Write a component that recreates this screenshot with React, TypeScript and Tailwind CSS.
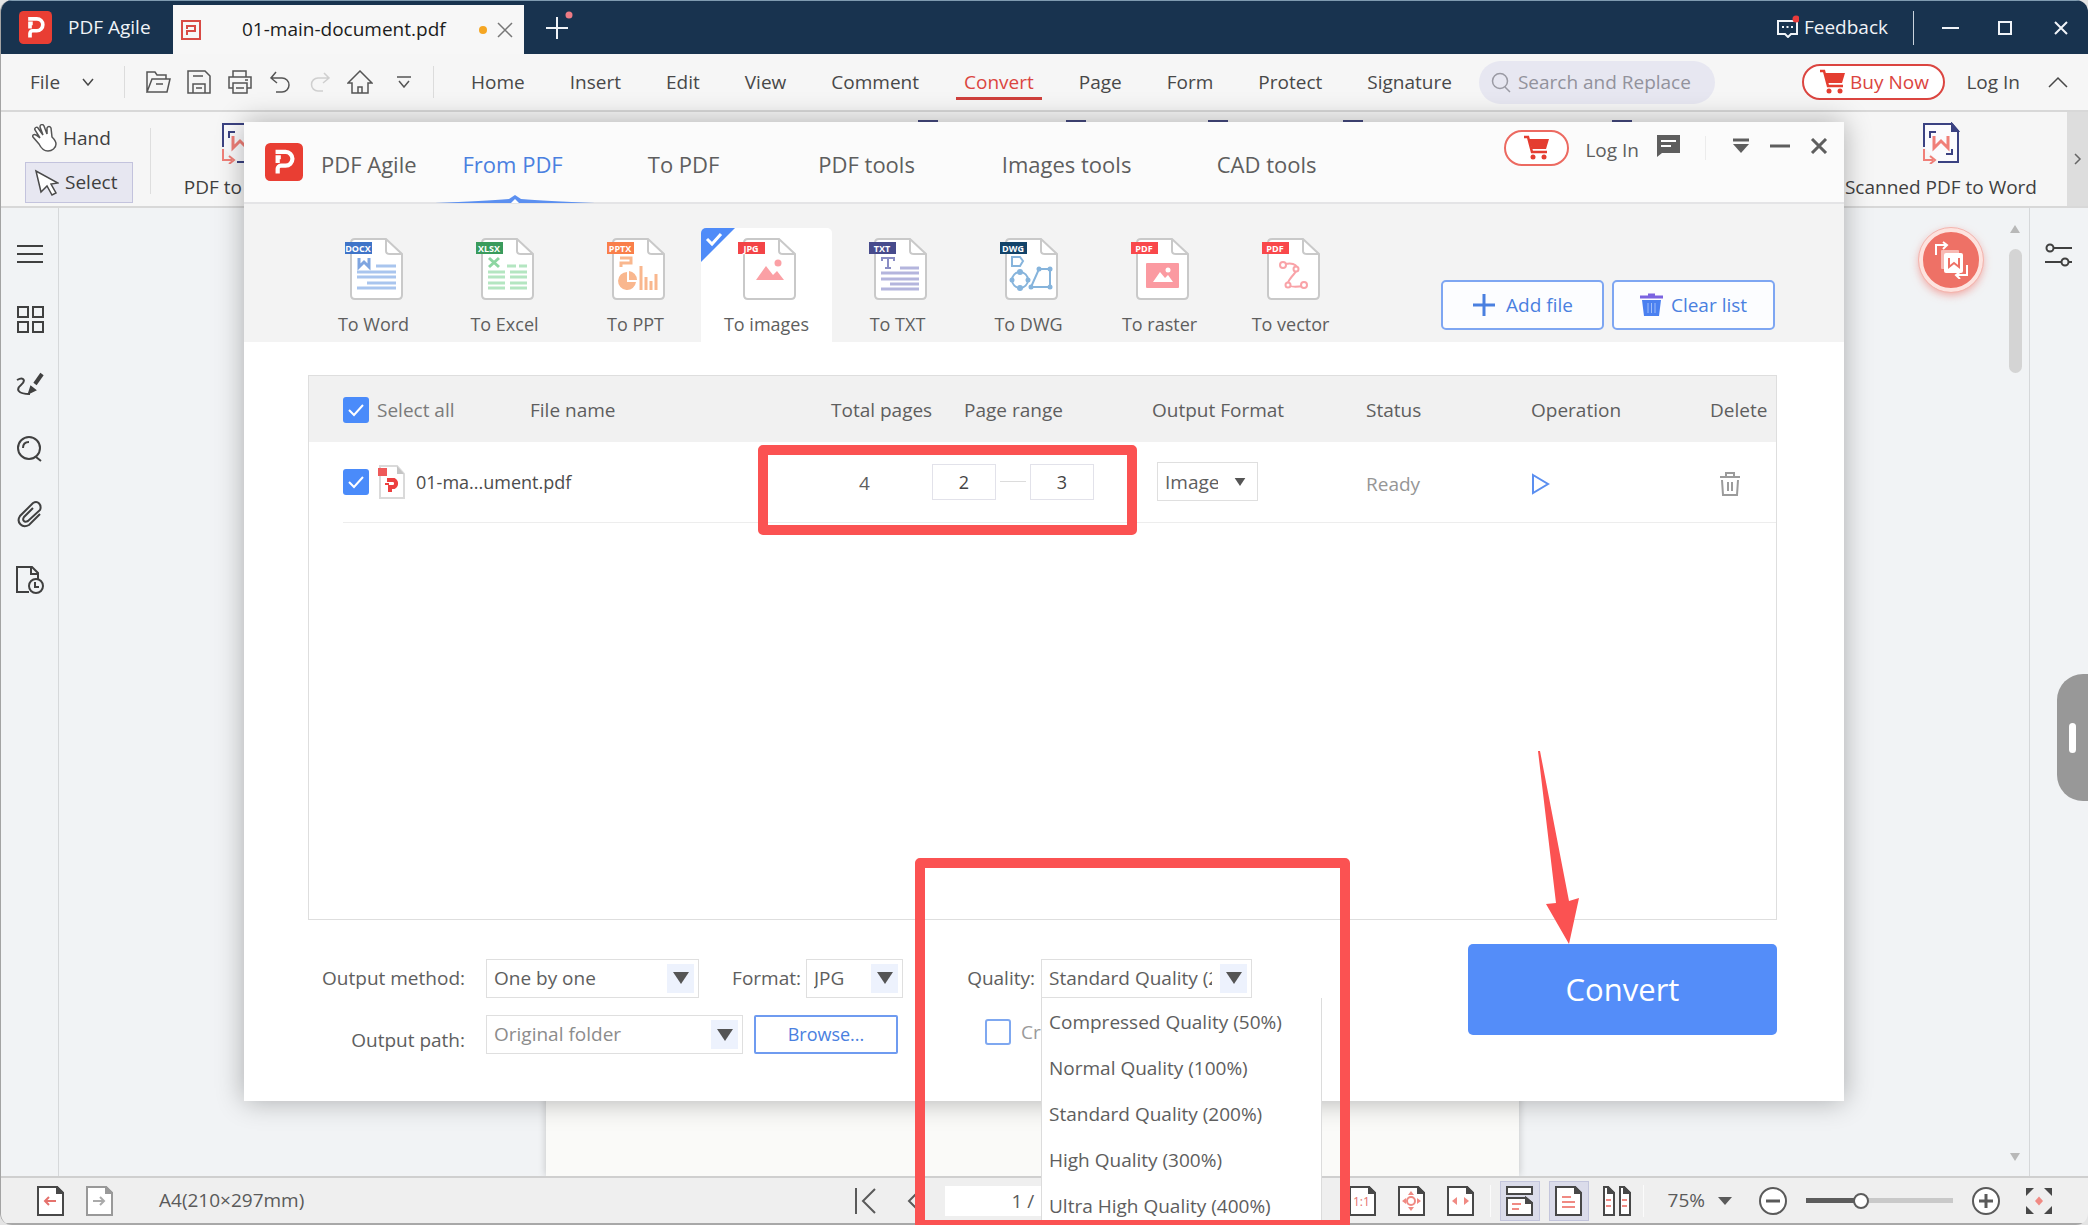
import { useState, type ReactNode } from 'react';

const menuTabs = ['Home', 'Insert', 'Edit', 'View', 'Comment', 'Convert', 'Page', 'Form', 'Protect', 'Signature'];
const qualities = [
  'Compressed Quality (50%)',
  'Normal Quality (100%)',
  'Standard Quality (200%)',
  'High Quality (300%)',
  'Ultra High Quality (400%)',
];

interface SvgProps {
  w: number;
  h: number;
  box?: string;
  className?: string;
  children: ReactNode;
}

function Svg({ w, h, box, className = '', children }: SvgProps) {
  return (
    <svg width={w} height={h} viewBox={box ?? `0 0 ${w} ${h}`} fill="none" stroke="currentColor"
         strokeWidth="2" className={`shrink-0 ${className}`} aria-hidden="true">
      {children}
    </svg>
  );
}

function Logo({ size }: { size: number }) {
  return (
    <Svg w={size} h={size} box="0 0 36 36">
      <rect width="36" height="36" rx="5" fill="#e93e33" stroke="none" />
      <path d="M10 8.500h9.500a6.500 6.500 0 0 1 0 13H15a3 3 0 0 0-3 3V29M12 19v-5.500h3" stroke="#fff" strokeWidth="4" />
    </Svg>
  );
}

function Cart() {
  return (
    <Svg w={27} h={26} className="text-[#e43d30]">
      <path d="M1 2h4l4 15h15" strokeWidth="2.500" />
      <path d="M6 4h20l-3 10H9z" fill="currentColor" stroke="none" />
      <circle cx="10" cy="22" r="2.500" fill="currentColor" stroke="none" />
      <circle cx="21" cy="22" r="2.500" fill="currentColor" stroke="none" />
    </Svg>
  );
}

function RibbonDoc() {
  return (
    <Svg w={38} h={42}>
      <path d="M2 25V2h28l6 7v31H16" stroke="#3b4282" fill="#fbfbfd" />
      <path d="M30 2v7h6z" fill="#3b4282" stroke="#3b4282" />
      <path d="M8 16v-6h6M30 27v5h-6" stroke="#3b4282" />
      <path d="M12 14v12l7-7 7 7V14" stroke="#f07f78" strokeWidth="3" />
      <path d="M2 27v11h9M8 34l5 4-5 4" stroke="#f07f78" />
    </Svg>
  );
}

/* ---------- title bar ---------- */

function TitleBar() {
  return (
    <header className="flex h-[54px] shrink-0 items-stretch border-t border-[#7f9bb0] bg-[#18334f] text-[19px] text-[#f0f4f8]">
      <div className="flex w-[172px] items-center gap-4 pl-[18px]">
        <Logo size={33} />
        <span className="whitespace-nowrap">PDF Agile</span>
      </div>
      <div className="mt-1 flex w-[351px] items-center bg-[#f7f7f7] pl-2 pr-[11px] text-[#1c1c1c]">
        <Svg w={20} h={20} className="text-[#d84a44]">
          <rect x="1" y="1" width="18" height="18" />
          <path d="M6 15v-4h8V6H6v3" />
        </Svg>
        <span className="ml-[41px] flex-1 whitespace-nowrap">01-main-document.pdf</span>
        <span className="size-2 rounded-full bg-[#f5a623]" />
        <button aria-label="Close tab" className="ml-[10px]">
          <Svg w={16} h={16} className="text-[#777]"><path d="M1 1l14 14M15 1L1 15" strokeWidth="1.500" /></Svg>
        </button>
      </div>
      <button aria-label="New tab" className="ml-[21px] mb-2">
        <Svg w={30} h={34}>
          <path d="M12 10v22M1 21h22" />
          <circle cx="24" cy="8" r="3.500" fill="#ee7b84" stroke="none" />
        </Svg>
      </button>
      <div className="ml-auto flex items-center pr-5">
        <button className="flex items-center gap-[5px]">
          <Svg w={22} h={24} className="mb-1">
            <path d="M1 7h19v13h-6l-3 3-3-3H1z" />
            <path d="M5 13h2M9.500 13h2M14 13h2" />
            <circle cx="19" cy="5" r="3.500" fill="#ea3b3b" stroke="none" />
          </Svg>
          Feedback
        </button>
        <span className="ml-[25px] h-[34px] w-px bg-[#c9d3dd]" />
        <button aria-label="Minimize" className="ml-7"><Svg w={17} h={16}><path d="M0 8h17" /></Svg></button>
        <button aria-label="Maximize" className="ml-[38px]"><Svg w={16} h={16}><path d="M2 2h12v12H2z" /></Svg></button>
        <button aria-label="Close" className="ml-[41px]"><Svg w={14} h={14}><path d="M1 1l12 12M13 1L1 13" /></Svg></button>
      </div>
    </header>
  );
}

/* ---------- menu ---------- */

function MenuBar() {
  return (
    <nav className="flex h-[58px] shrink-0 items-center border-b-2 border-[#d8d8d8] bg-[#f6f6f6] pl-[29px] text-[19px] text-[#484848]">
      <button className="flex items-center gap-[22px]">
        File
        <Svg w={12} h={8}><path d="M1 1l5 6 5-6" strokeWidth="1.500" /></Svg>
      </button>
      <span className="ml-[30px] h-8 w-px bg-[#dcdcdc]" />
      <div className="ml-5 flex items-center gap-4 text-[#555]">
        <button aria-label="Open">
          <Svg w={26} h={24}><path d="M2 22V2h8l2 3h9v4M2 22l5-13h18l-3 13zM11 14h7" strokeWidth="1.500" /></Svg>
        </button>
        <button aria-label="Save">
          <Svg w={24} h={24}><path d="M1 1h17l5 5v17H1zM6 23v-9h12v9M6 6h10M9 18h6" strokeWidth="1.500" /></Svg>
        </button>
        <button aria-label="Print">
          <Svg w={26} h={24}><path d="M6 7V1h13v6M6 18H2V7h22v11h-4M6 13h14v10H6zM9 18h8M18 10h3" strokeWidth="1.500" /></Svg>
        </button>
        <button aria-label="Undo">
          <Svg w={24} h={24}><path d="M7 2L2 8l6 5M2 8h11a7 7 0 0 1 0 14H7" strokeWidth="1.500" /></Svg>
        </button>
        <button aria-label="Redo" className="text-[#cfcfcf]">
          <Svg w={22} h={24}><path d="M15 3l5 5-6 5M20 8H9a6 6 0 0 0 0 13h5" strokeWidth="1.500" /></Svg>
        </button>
        <button aria-label="Start page">
          <Svg w={26} h={24}><path d="M1 13L13 1l12 12h-4v10H5V13zM11 23v-6h4v6" strokeWidth="1.500" /></Svg>
        </button>
        <button aria-label="More" className="ml-2">
          <Svg w={15} h={12}><path d="M0 1h14M2 5l5 6 5-6" strokeWidth="1.500" /></Svg>
        </button>
      </div>
      <span className="ml-[21px] h-8 w-px bg-[#dcdcdc]" />
      <div className="ml-[37px] flex items-center gap-[45px]">
        {menuTabs.map((tab) => (
          <button key={tab} className={tab === 'Convert' ? 'relative text-[#db4540]' : 'relative'}>
            {tab}
            {tab === 'Convert' && <span className="absolute -inset-x-2 -bottom-1 h-[3px] bg-[#d0403c]" />}
          </button>
        ))}
      </div>
      <label className="ml-[27px] flex h-[43px] w-[236px] items-center gap-[6px] rounded-full bg-[#e7e7f1] pl-3 text-[#9a9aa3]">
        <Svg w={21} h={21}><circle cx="9" cy="9" r="7.500" strokeWidth="1.500" /><path d="M14 15l5 5" strokeWidth="1.500" /></Svg>
        <input aria-label="Search and Replace" placeholder="Search and Replace"
               className="w-[190px] bg-transparent outline-none placeholder:text-[#92929c]" />
      </label>
      <div className="ml-auto flex items-center pr-[20px]">
        <button className="flex h-9 w-[143px] items-center justify-center gap-1 whitespace-nowrap rounded-full border-2 border-[#db4540] bg-white text-[#db4540]">
          <Cart />Buy Now
        </button>
        <button className="ml-[21px] whitespace-nowrap">Log In</button>
        <button aria-label="Collapse ribbon" className="ml-7"><Svg w={20} h={12}><path d="M1 11l9-9 9 9" strokeWidth="1.500" /></Svg></button>
      </div>
    </nav>
  );
}

function Ribbon() {
  return (
    <div className="flex h-24 shrink-0 border-b-2 border-[#d8d8d8] bg-[#f6f6f6] text-[19px] text-[#3f3f3f]">
      <div className="flex flex-col pl-6 pt-[6px]">
        <button className="flex h-10 items-center gap-[6px] pl-[6px]">
          <Svg w={26} h={28} className="text-[#555]">
            <path d="M8 20L2 13c-1-2 1-3 3-2l4 3L4 6c-1-2 2-4 3-2l5 7-3-8c0-3 3-3 4-1l3 8V4c1-2 3-2 4 0l1 9c2 2 4 4 4 7 0 4-4 7-8 7-5 0-7-3-9-7z" strokeWidth="1.500" fill="#fff" />
          </Svg>
          Hand
        </button>
        <button className="mt-1 flex h-[41px] w-[108px] items-center gap-[6px] border border-[#c3c3dd] bg-[#e7e7f1] pl-2">
          <Svg w={25} h={28} className="text-[#4a4a4a]"><path d="M2 2l5 21 6-6 5 9 4-2-5-9 7-1z" strokeWidth="1.500" fill="#fff" /></Svg>
          Select
        </button>
      </div>
      <span className="ml-[17px] mt-4 h-[66px] w-px bg-[#dedede]" />
      <div className="ml-[36px] flex w-[105px] flex-col items-center pt-[10px]">
        <RibbonDoc />
        <span className="mt-[9px] whitespace-nowrap">PDF to Word</span>
      </div>
      {/* tops of the tools that sit under the dialog */}
      <div className="ml-[626px] mt-2 flex h-10 *:w-5 *:border-2 *:border-[#454a80]">
        <span />
        <span className="ml-[128px]" />
        <span className="ml-[122px]" />
        <span className="ml-[115px]" />
        <span className="ml-[249px]" />
      </div>
      <div className="ml-auto flex flex-col items-center pr-[30px] pt-[10px]">
        <RibbonDoc />
        <span className="mt-[9px] whitespace-nowrap">Scanned PDF to Word</span>
      </div>
      <button aria-label="Scroll ribbon" className="flex w-[21px] items-center justify-center bg-[#dddddd] text-[#666]">
        <Svg w={8} h={12}><path d="M1 1l5 5-5 5" strokeWidth="1.500" /></Svg>
      </button>
    </div>
  );
}

/* ---------- workspace ---------- */

function Workspace() {
  return (
    <div className="flex min-h-0 flex-1 bg-[#f1f3f5]">
      <aside className="flex w-[58px] shrink-0 flex-col items-center gap-[37px] border-r border-[#d6d8da] pt-[32px] text-[#404040]">
        <button aria-label="Menu"><Svg w={28} h={28}><path d="M1 6h26M1 14h26M1 22h26" /></Svg></button>
        <button aria-label="Thumbnails">
          <Svg w={28} h={28}><path d="M2 2h10v10H2zM17 2h10v10H17zM2 17h10v10H2zM17 17h10v10H17z" /></Svg>
        </button>
        <button aria-label="Signature">
          <Svg w={28} h={28}>
            <path d="M1 10c7-4 9 1 4 5s-4 9 9 9" />
            <path d="M26 4l-7 10" strokeWidth="4" />
            <path d="M13 23l2-6 4 3z" fill="currentColor" />
          </Svg>
        </button>
        <button aria-label="Search">
          <Svg w={28} h={28}><circle cx="13" cy="13" r="11" /><path d="M20 22l5 4M7 13c0-4 2-6 6-6" /></Svg>
        </button>
        <button aria-label="Attachments">
          <Svg w={28} h={28}><path d="M24 14L13 25c-7 4-13-3-9-9L17 3c5-3 9 2 7 7L12 21c-4 2-6-1-4-4l9-9" /></Svg>
        </button>
        <button aria-label="History">
          <Svg w={30} h={30}><path d="M14 27H2V2h15l6 6v7M16 2v7h7" /><circle cx="21" cy="21" r="7" /><path d="M20 17v5h4" /></Svg>
        </button>
      </aside>

      <main className="flex flex-1 justify-center overflow-hidden pl-[4px]">
        <div className="w-full max-w-[973px] bg-[#fafaf8] shadow-[0_0_8px_rgba(0,0,0,0.2)]" />
      </main>

      <div className="flex w-[28px] shrink-0 flex-col items-center pb-[14px] pt-[16px] text-[#b8b8b8]">
        <Svg w={10} h={10}><path d="M5 1l5 8H0z" fill="currentColor" stroke="none" /></Svg>
        <span className="mt-[15px] h-[124px] w-[13px] rounded-full bg-[#d4d4d4]" />
        <Svg w={10} h={10} className="mt-auto"><path d="M5 9l5-8H0z" fill="currentColor" stroke="none" /></Svg>
      </div>
      <aside className="flex w-[59px] shrink-0 flex-col items-center border-l border-[#d6d8da] pt-[35px] text-[#404040]">
        <button aria-label="Properties">
          <Svg w={28} h={24}><circle cx="5" cy="5" r="3.500" /><path d="M9 5h18M0 19h17M24 19h3" /><circle cx="20" cy="19" r="3.500" /></Svg>
        </button>
      </aside>
    </div>
  );
}

function FloatingTools() {
  return (
    <>
      <button aria-label="Convert document"
              className="absolute right-[105px] top-[228px] flex size-16 items-center justify-center rounded-full border-4 border-[#fde3df] bg-[#ee7166] shadow-[0_3px_8px_rgba(240,110,100,0.6)] outline outline-[#f5b5ae]">
        <Svg w={36} h={38} className="text-white">
          <path d="M3 14V4h10M10 1l4 3-4 4M34 24v10H24M27 31l-4 3 4 4" />
          <rect x="8" y="9" width="18" height="19" rx="1" fill="#f7b9b3" stroke="none" />
          <rect x="11" y="12" width="19" height="20" rx="2" fill="#fff" stroke="none" />
          <path d="M16 17v9l5-4 5 4v-9" stroke="#ee7166" />
        </Svg>
      </button>
      <button aria-label="Open side panel"
              className="absolute right-0 top-[674px] flex h-[127px] w-[31px] items-center rounded-l-[26px] bg-[#989898] pl-3">
        <span className="h-[30px] w-[7px] rounded-full bg-white" />
      </button>
    </>
  );
}

/* ---------- status bar ---------- */

function PageIcon({ children, w = 27, className = '' }: { children?: ReactNode; w?: number; className?: string }) {
  return (
    <Svg w={w} h={30} className={className || 'text-[#484848]'}>
      <path d={`M1 1h${w - 8}l6 6v22H1z`} fill="#fff" />
      <path d={`M${w - 7} 1v6h6z`} fill="currentColor" />
      {children}
    </Svg>
  );
}

function StatusBar() {
  const divider = <span className="h-8 w-px bg-[#fbfbfb]" />;
  return (
    <footer className="grid h-[49px] shrink-0 grid-cols-[1fr_auto_1fr] items-center border-b-2 border-t-2 border-b-[#a8a8a8] border-t-[#cfcfcf] bg-[#efefef] text-[19px] text-[#5a5a5a]">
      <div className="flex items-center pl-9">
        <button aria-label="Previous view"><PageIcon><path d="M8 15h11M12 11l-4 4 4 4" stroke="#e5726d" /></PageIcon></button>
        <button aria-label="Next view" className="ml-[22px]">
          <PageIcon className="text-[#999]"><path d="M7 15h11M14 11l4 4-4 4" stroke="#aaa" /></PageIcon>
        </button>
        <span className="ml-4">{divider}</span>
        <span className="ml-[30px]">A4(210×297mm)</span>
      </div>
      <div className="flex w-[380px] items-center">
        <button aria-label="First page"><Svg w={22} h={26}><path d="M1 0v26M20 1L8 13l12 12" /></Svg></button>
        <button aria-label="Previous page" className="ml-[30px]"><Svg w={12} h={26}><path d="M11 4L2 13l9 9" /></Svg></button>
        <input aria-label="Page number" defaultValue="1 /" className="ml-[26px] h-[30px] w-[190px] bg-white pl-[67px] outline-none" />
      </div>
      <div className="flex items-center justify-end pr-[35px]">
        <button aria-label="Actual size">
          <PageIcon><text x="4" y="20" fontSize="12" fill="#e5726d" stroke="none">1:1</text></PageIcon>
        </button>
        <button aria-label="Fit page" className="ml-[22px]">
          <PageIcon>
            <circle cx="13" cy="15" r="4" stroke="#f08a83" />
            <path d="M10 9l3-4 3 4zM10 21l3 4 3-4zM8 12l-4 3 4 3zM19 12l4 3-4 3z" fill="#f08a83" stroke="none" />
          </PageIcon>
        </button>
        <button aria-label="Fit width" className="ml-[22px] mr-4">
          <PageIcon><path d="M10 11l-5 4 5 4zM17 11l5 4-5 4z" fill="#f08a83" stroke="none" /></PageIcon>
        </button>
        {divider}
        <button aria-label="Continuous" className="ml-[9px] flex h-10 w-10 items-center justify-center border border-[#c3c5dc] bg-[#dbdcea]">
          <Svg w={27} h={30} className="text-[#484848]">
            <path d="M1 1h25v7H1zM1 12h19l6 5v12H1z" fill="#fff" />
            <path d="M20 12v5h6z" fill="currentColor" />
            <path d="M6 18h9M6 23h7" stroke="#f08a83" />
          </Svg>
        </button>
        <button aria-label="Single page" className="ml-[9px] flex h-10 w-10 items-center justify-center border border-[#c3c5dc] bg-[#dbdcea]">
          <PageIcon><path d="M7 11h9M7 16h13M7 21h13" stroke="#f08a83" /></PageIcon>
        </button>
        <button aria-label="Two pages" className="ml-[14px] mr-3 flex gap-1">
          <PageIcon w={12}><path d="M3 14h5M3 20h5" stroke="#f08a83" /></PageIcon>
          <PageIcon w={12}><path d="M3 14h5M3 20h5" stroke="#f08a83" /></PageIcon>
        </button>
        {divider}
        <button className="ml-[24px] flex items-center gap-[13px]">
          75%
          <Svg w={14} h={10}><path d="M0 1h14l-7 8z" fill="currentColor" stroke="none" /></Svg>
        </button>
        <button aria-label="Zoom out" className="ml-[26px]">
          <Svg w={30} h={30}><circle cx="15" cy="15" r="13" fill="#fff" /><path d="M8 15h14" strokeWidth="3" /></Svg>
        </button>
        <input type="range" aria-label="Zoom" min="0" max="100" defaultValue="36"
               className="mx-[18px] h-[5px] w-[147px] appearance-none bg-linear-to-r from-[#5c5c5c] from-38% to-[#c9c9c9] to-38% [&::-webkit-slider-thumb]:size-4 [&::-webkit-slider-thumb]:appearance-none [&::-webkit-slider-thumb]:rounded-full [&::-webkit-slider-thumb]:border-2 [&::-webkit-slider-thumb]:border-[#5c5c5c] [&::-webkit-slider-thumb]:bg-white" />
        <button aria-label="Zoom in">
          <Svg w={30} h={30}><circle cx="15" cy="15" r="13" fill="#fff" /><path d="M8 15h14M15 8v14" strokeWidth="3" /></Svg>
        </button>
        <button aria-label="Full screen" className="ml-6">
          <Svg w={28} h={28} className="text-[#484848]">
            <path d="M1 1h8L1 9zM27 1h-8l8 8zM1 27h8l-8-8zM27 27h-8l8-8z" fill="currentColor" stroke="none" />
            <path d="M14 9.500l4 4.500-4 4.500-4-4.500z" fill="#f08a83" stroke="none" />
          </Svg>
        </button>
      </div>
    </footer>
  );
}

/* ---------- converter dialog ---------- */

interface Format {
  label: string;
  tag: string;
  color: string;
  art: ReactNode;
}

const formats: Format[] = [
  {
    label: 'To Word', tag: 'DOCX', color: '#3f74c8',
    art: (
      <g stroke="#a9c5ee" strokeWidth="3">
        <path d="M16 20v9l5-5 5 5v-9" stroke="#7fa5e0" />
        <path d="M33 28h20M14 34h39M14 39h39M24 45h29M14 50h39" />
      </g>
    ),
  },
  {
    label: 'To Excel', tag: 'XLSX', color: '#3a9b5c',
    art: (
      <g stroke="#b4e6c1" strokeWidth="3">
        <path d="M15 20l10 9M25 20l-10 9" stroke="#8ed6a2" />
        <path d="M33 28h9M45 28h8M14 34h17M36 34h17M14 39h17M36 39h17M14 45h17M36 45h17M14 50h17M36 50h17" />
      </g>
    ),
  },
  {
    label: 'To PPT', tag: 'PPTX', color: '#f97f4a',
    art: (
      <g stroke="#f9b78e" strokeWidth="3">
        <path d="M16 29v-4h10v-5H15" />
        <path d="M22 34a9 9 0 1 0 9 10h-9z" fill="#f9b78e" stroke="none" />
        <path d="M24 33a9 9 0 0 1 8 9h-8z" fill="#f9b78e" stroke="none" />
        <path d="M36 28v24M41 39v13M46 43v9M51 36v16" />
      </g>
    ),
  },
  {
    label: 'To images', tag: 'JPG', color: '#f34447',
    art: (
      <g fill="#fba0a5" stroke="none">
        <circle cx="42" cy="25" r="3.500" />
        <path d="M20 42l10-14 7 9 4-4 7 9z" />
      </g>
    ),
  },
  {
    label: 'To TXT', tag: 'TXT', color: '#474b8c',
    art: (
      <g stroke="#b4b5dd" strokeWidth="3">
        <path d="M15 23v-3h12v3M21 20v10M18 30h6" stroke="#8a8dc4" strokeWidth="2" />
        <path d="M33 30h19M14 35h38M14 41h38M23 46h29M14 51h38" />
      </g>
    ),
  },
  {
    label: 'To DWG', tag: 'DWG', color: '#124369',
    art: (
      <g stroke="#86b4dc">
        <path d="M14 19h8l3 4-3 5h-8z" />
        <circle cx="22" cy="42" r="8" />
        <path d="M33 49l8-18h11v18z" />
        <g fill="#86b4dc" stroke="none">
          <circle cx="22" cy="34" r="3" /><circle cx="22" cy="50" r="3" /><circle cx="14" cy="42" r="2.500" /><circle cx="30" cy="42" r="2.500" />
          <circle cx="33" cy="49" r="2.500" /><circle cx="41" cy="31" r="2.500" /><circle cx="52" cy="31" r="2.500" /><circle cx="52" cy="49" r="2.500" />
        </g>
      </g>
    ),
  },
  {
    label: 'To raster', tag: 'PDF', color: '#f9484b',
    art: (
      <g stroke="none">
        <rect x="17" y="25" width="33" height="25" rx="1" fill="#fb9aa1" />
        <path d="M24 44l7-10 5 6 3-3 5 7z" fill="#fff" />
        <circle cx="39" cy="32" r="2.500" fill="#fff" />
      </g>
    ),
  },
  {
    label: 'To vector', tag: 'PDF', color: '#f9484b',
    art: (
      <g stroke="#f9a3a8">
        <path d="M25 26c9-2 16 2 9 10s-13 15 10 12" />
        <circle cx="23" cy="27" r="3" fill="#fff" /><circle cx="36" cy="31" r="2.500" fill="#fff" />
        <circle cx="28" cy="47" r="2.500" fill="#fff" /><circle cx="44" cy="47" r="3" fill="#fff" />
      </g>
    ),
  },
];

function FormatIcon({ format }: { format: Format }) {
  return (
    <Svg w={62} h={62}>
      <path d="M12 1h31l16 15v41q0 4-4 4H12q-4 0-4-4V5q0-4 4-4z" fill="#fff" stroke="#c9c9c9" />
      <path d="M43 1v12q0 3 4 3h12" stroke="#c9c9c9" />
      <rect x="2" y="4" width="27" height="12" fill={format.color} stroke="none" />
      <text x="15" y="14" textAnchor="middle" fontSize="9" fontWeight="700" fill="#fff" stroke="none">{format.tag}</text>
      {format.art}
    </Svg>
  );
}

function Check({ id, label }: { id: string; label: string }) {
  return (
    <span className="relative block size-[26px] shrink-0">
      <input id={id} type="checkbox" defaultChecked aria-label={label}
             className="block size-[26px] appearance-none rounded-[3px] bg-[#4a8bfa]" />
      <Svg w={26} h={26} className="pointer-events-none absolute left-0 top-0 text-white"><path d="M6 13l5 5 9-10" /></Svg>
    </span>
  );
}

interface DropdownProps {
  id: string;
  value: string;
  className: string;
  plain?: boolean;
}

function Dropdown({ id, value, className, plain }: DropdownProps) {
  return (
    <span className={`relative block h-[39px] shrink-0 ${className}`}>
      <select id={id} aria-label={id} className="block size-full appearance-none border border-[#dfdfdf] bg-white pl-[7px] pr-[39px] outline-none">
        <option>{value}</option>
      </select>
      <span className={`pointer-events-none absolute inset-y-[5px] right-[5px] flex w-[27px] items-center justify-center ${plain ? '' : 'bg-[#edf2fd]'}`}>
        <Svg w={plain ? 12 : 16} h={plain ? 8 : 12} box="0 0 16 12"><path d="M0 0h16L8 12z" fill="#555" stroke="none" /></Svg>
      </span>
    </span>
  );
}

function DialogHeader() {
  return (
    <div className="flex h-[82px] border-b-2 border-[#e4e4e6] bg-[#fbfbfb] pl-[21px] text-[22px] text-[#5e5e5e]">
      <div className="flex items-center gap-[18px]">
        <Logo size={38} />
        <span className="whitespace-nowrap pt-1">PDF Agile</span>
      </div>
      <div className="ml-[28px] flex *:pt-1">
        <button className="relative w-[136px] text-[#4a80e0]">
          From PDF
          <Svg w={160} h={9} className="absolute -bottom-[2px] -left-[10px]">
            <path d="M0 8Q50 6 74 4l6-4 6 4q24 2 74 4z" fill="#5b8ff0" stroke="none" />
            <path d="M76 8l4-4 4 4z" fill="#fff" stroke="none" />
          </Svg>
        </button>
        <button className="w-[206px]">To PDF</button>
        <button className="w-[160px]">PDF tools</button>
        <button className="w-[240px]">Images tools</button>
        <button className="w-[160px]">CAD tools</button>
      </div>
      <div className="mt-2 ml-auto flex h-9 items-center pr-[16px] text-[19px]">
        <button aria-label="Buy" className="flex h-9 w-[65px] items-center justify-center rounded-full border-2 border-[#ec6a61] bg-white"><Cart /></button>
        <button className="ml-4 whitespace-nowrap pt-1">Log In</button>
        <button aria-label="Messages" className="ml-[17px] mb-1">
          <Svg w={25} h={24} className="text-[#5e5e5e]">
            <path d="M1 1h23v18H6l-5 4z" fill="currentColor" stroke="none" />
            <path d="M5 7h15M5 12h10" stroke="#fff" />
          </Svg>
        </button>
        <span className="ml-6 h-6 w-px bg-[#ececec]" />
        <button aria-label="Menu" className="ml-[26px] mb-1">
          <Svg w={18} h={16} className="text-[#5e5e5e]"><path d="M1 2h16" strokeWidth="3" /><path d="M1 6h16l-8 9z" fill="currentColor" stroke="none" /></Svg>
        </button>
        <button aria-label="Minimize dialog" className="ml-5 mb-1"><Svg w={20} h={16}><path d="M0 8h20" strokeWidth="3" /></Svg></button>
        <button aria-label="Close dialog" className="ml-5 mb-1"><Svg w={18} h={16}><path d="M2 1l14 14M16 1L2 15" strokeWidth="3" /></Svg></button>
      </div>
    </div>
  );
}

function FormatTabs() {
  const button = 'flex h-[50px] w-[163px] items-center justify-center whitespace-nowrap rounded-[5px] border-2 border-[#7ea6f2] bg-[#fcfdff] text-[19px] text-[#4a80e0]';
  return (
    <div className="flex h-[138px] items-start justify-between bg-[#f3f3f3] pl-16 pr-[69px] pt-6">
      <div className="flex">
        {formats.map((format) => {
          const active = format.tag === 'JPG';
          return (
            <button key={format.label}
                    className={`relative flex h-[114px] w-[131px] flex-col items-center overflow-hidden rounded-t-[5px] pt-[10px] text-[18px] text-[#5e5e5e] ${active ? 'bg-white' : ''}`}>
              {active && (
                <Svg w={34} h={34} className="absolute left-0 top-0">
                  <path d="M0 0h34L0 34z" fill="#4f8bf8" stroke="none" />
                  <path d="M6 11l5 5 9-10" stroke="#fff" strokeWidth="3" />
                </Svg>
              )}
              <FormatIcon format={format} />
              <span className="mt-[11px] whitespace-nowrap leading-[26px]">{format.label}</span>
            </button>
          );
        })}
      </div>
      <div className="flex gap-2 pt-[52px]">
        <button className={`${button} gap-[10px]`}>
          <Svg w={24} h={24}><path d="M12 1v22M1 12h22" strokeWidth="3" /></Svg>
          Add file
        </button>
        <button className={`${button} gap-2`}>
          <Svg w={23} h={24}>
            <path d="M0 4h23M8 2h7" stroke="#7a63e0" strokeWidth="3" />
            <path d="M2 7h19l-2 16H4z" fill="#4a80f0" stroke="none" />
            <path d="M8 10v10M11.500 10v10M15 10v10" stroke="#9fbdf8" strokeWidth="1" />
          </Svg>
          Clear list
        </button>
      </div>
    </div>
  );
}

function FileTable() {
  const [from, setFrom] = useState('2');
  const [to, setTo] = useState('3');
  const pageInput = 'h-9 w-16 border border-[#e2e2ea] bg-white text-center text-[18px] text-[#444] outline-none';
  const line = 'border-b border-[#ededed]';
  return (
    <div className="ml-16 mr-[67px] mt-[33px] min-h-[545px] border border-[#dedede]">
      <table className="w-full table-fixed text-left text-[19px] text-[#5e5e5e]">
        <colgroup>
          <col className="w-[34px]" />
          <col className="w-[187px]" />
          <col />
          <col className="w-[101px]" />
          <col className="w-[220px]" />
          <col className="w-[214px]" />
          <col className="w-[165px]" />
          <col className="w-[179px]" />
          <col className="w-[66px]" />
        </colgroup>
        <thead>
          <tr className="h-[66px] whitespace-nowrap bg-[#f1f1f1] *:pt-[2px] *:font-normal">
            <th />
            <th>
              <label className="flex items-center gap-2 text-[#7b7b7b]">
                <Check id="all" label="Select all" />Select all
              </label>
            </th>
            <th>File name</th>
            <th>Total pages</th>
            <th className="pl-8">Page range</th>
            <th>Output Format</th>
            <th>Status</th>
            <th>Operation</th>
            <th>Delete</th>
          </tr>
        </thead>
        <tbody>
          <tr className="h-[80px]">
            <td />
            <td colSpan={2} className={line}>
              <label className="flex items-center text-[18px] text-[#4c4c4c]">
                <Check id="file" label="01-main-document.pdf" />
                <Svg w={30} h={34} className="ml-2">
                  <path d="M3 1h17l7 8v24H3z" fill="#fff" stroke="#dadada" />
                  <path d="M20 1v8h7z" fill="#c4c4c4" stroke="none" />
                  <rect x="1" y="3" width="9" height="8" fill="#ee5a5a" stroke="none" />
                  <path d="M10 15h7a4 4 0 0 1 0 7h-4v5M10 18v2" stroke="#ec3f3f" strokeWidth="4" />
                </Svg>
                <span className="ml-[9px] pt-[2px]">01-ma...ument.pdf</span>
              </label>
            </td>
            <td className={`${line} pl-[28px] pt-[2px]`}>4</td>
            <td className={line}>
              <div className="flex items-center">
                <input aria-label="First page" value={from} onChange={(e) => setFrom(e.target.value)} className={pageInput} />
                <span className="mx-1 h-px w-[26px] bg-[#dcdcdc]" />
                <input aria-label="Last page" value={to} onChange={(e) => setTo(e.target.value)} className={pageInput} />
              </div>
            </td>
            <td className={`${line} pl-[5px]`}><Dropdown id="Output type" value="Image" plain className="w-[101px]" /></td>
            <td className={`${line} pt-1 text-[#969696]`}>Ready</td>
            <td className={`${line} pt-1`}>
              <button aria-label="Start" className="block text-[#5b8ff0]"><Svg w={20} h={22}><path d="M2 2l15 9-15 9z" /></Svg></button>
            </td>
            <td className={`${line} pt-1`}>
              <button aria-label="Delete file" className="ml-[10px] block text-[#9b9b9b]">
                <Svg w={20} h={24}><path d="M0 5h20M6 5V1h8v4M2 8l1 15h14l1-15M8 10v9M12 10v9" /></Svg>
              </button>
            </td>
          </tr>
        </tbody>
      </table>
    </div>
  );
}

function OutputOptions() {
  return (
    <div className="flex items-start justify-between pb-[47px] pl-[63px] pr-[67px] pt-6 text-[19px] text-[#5e5e5e]">
      <div className="flex pt-[14px]">
        <div className="flex flex-col gap-[17px]">
          <div className="flex h-10 items-center">
            <label htmlFor="Output method" className="w-[158px] whitespace-nowrap text-right">Output method:</label>
            <Dropdown id="Output method" value="One by one" className="ml-[21px] w-[213px]" />
            <label htmlFor="Format" className="w-[102px] text-right">Format:</label>
            <Dropdown id="Format" value="JPG" className="ml-[5px] w-[97px]" />
          </div>
          <div className="flex h-[39px] items-end">
            <label htmlFor="Output path" className="w-[158px] whitespace-nowrap text-right">Output path:</label>
            <Dropdown id="Output path" value="Original folder" className="ml-[21px] w-[257px] text-[#8c8c8c]" />
            <button className="ml-[11px] h-[39px] w-[144px] rounded-[2px] border-2 border-[#6f9bf0] text-[18px] text-[#4a80e0]">Browse...</button>
          </div>
        </div>
        <div className="flex flex-col gap-[21px] pl-[63px]">
          <div className="flex h-10 items-center">
            <label htmlFor="Quality" className="w-[69px] text-right">Quality:</label>
            <div className="relative ml-[6px]">
              <Dropdown id="Quality" value="Standard Quality (200%)" className="w-[211px]" />
              <ul className="absolute left-0 top-full z-10 flex w-[281px] flex-col gap-[19px] border-x border-[#dcdcdc] bg-white pb-4 pl-[7px] pt-[11px]">
                {qualities.map((quality) => (
                  <li key={quality}>
                    <button className="block whitespace-nowrap leading-[27px]">{quality}</button>
                  </li>
                ))}
              </ul>
            </div>
          </div>
          <label className="ml-[19px] flex h-[26px] items-center gap-[10px] text-[#9a9a9a]">
            <input type="checkbox" className="size-[26px] appearance-none rounded-[3px] border-2 border-[#7fa8f0] bg-white" />
            Cr
          </label>
        </div>
      </div>
      <div className="relative">
        <button className="h-[91px] w-[309px] rounded-[5px] bg-[#548df9] text-[31px] text-white">Convert</button>
        <svg width="42" height="193" viewBox="0 0 42 193" className="absolute bottom-full left-[70px] text-[#fb5252]" aria-hidden="true">
          <path d="M0 0L2 0L31 150L41 147L31 193L8 153L18 152Z" fill="currentColor" />
        </svg>
      </div>
    </div>
  );
}

function ConvertDialog() {
  return (
    <section role="dialog" aria-label="PDF Agile"
             className="absolute left-[243px] right-[244px] top-[122px] bg-white shadow-[0_0_26px_rgba(0,0,0,0.3)]">
      <DialogHeader />
      <FormatTabs />
      <FileTable />
      <OutputOptions />
      <div className="pointer-events-none absolute left-[514px] top-[323px] h-[90px] w-[379px] rounded-[5px] border-[10px] border-[#fb5252]" />
      <div className="pointer-events-none absolute left-[671px] top-[736px] z-20 h-[372px] w-[435px] rounded-[5px] border-[10px] border-[#fb5252]" />
    </section>
  );
}

export default function App() {
  return (
    <div className="h-screen bg-[#e4e4e4] font-['Open_Sans','Noto_Sans',sans-serif]">
      <div className="relative flex h-full flex-col overflow-hidden rounded-xl border-l border-[#a3a3a3]">
        <TitleBar />
        <MenuBar />
        <Ribbon />
        <Workspace />
        <StatusBar />
        <FloatingTools />
        <ConvertDialog />
      </div>
    </div>
  );
}
